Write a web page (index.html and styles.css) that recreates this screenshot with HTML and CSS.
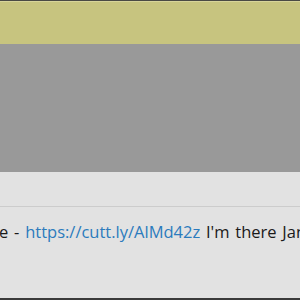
FILE: index.html
```html
<!DOCTYPE html>
<html>
<head>
<meta charset="utf-8">
<link rel="stylesheet" href="styles.css">
</head>
<body>
<div class="page">
  <div class="topbar"></div>
  <div class="banner"></div>
  <div class="media"></div>
  <div class="panel">
    <div class="divider"></div>
    <p class="msg"><span class="lead">Live</span> - <a class="link" href="#">https://cutt.ly/AlMd42z</a> I'm there Jan</p>
  </div>
  <div class="bottombar"></div>
</div>
</body>
</html>
```
FILE: styles.css
```css
html, body {
  margin: 0;
  padding: 0;
  width: 300px;
  height: 300px;
  overflow: hidden;
  background: #e2e2e2;
}
.page {
  display: flex;
  flex-direction: column;
  height: 300px;
  font-family: "Open Sans", "Noto Sans", sans-serif;
}
.topbar {
  height: 1px;
  background: #4a4a44;
  border-bottom: 1px solid #d8d59a;
}
.banner {
  height: 42px;
  background: #c7c47f;
}
.media {
  height: 128px;
  background: #999999;
}
.panel {
  flex: 1;
  background: #e2e2e2;
  overflow: hidden;
  padding-top: 34px;
}
.divider {
  height: 1px;
  background: #cccccc;
}
.msg {
  margin: 14px 0 0 -22px;
  white-space: nowrap;
  font-size: 16.5px;
  line-height: 22px;
  word-spacing: 1.5px;
  color: #1a1a1a;
}
.link {
  color: #2b7bbd;
  text-decoration: none;
}
.bottombar {
  height: 2px;
  background: #3a3a3a;
}
```
